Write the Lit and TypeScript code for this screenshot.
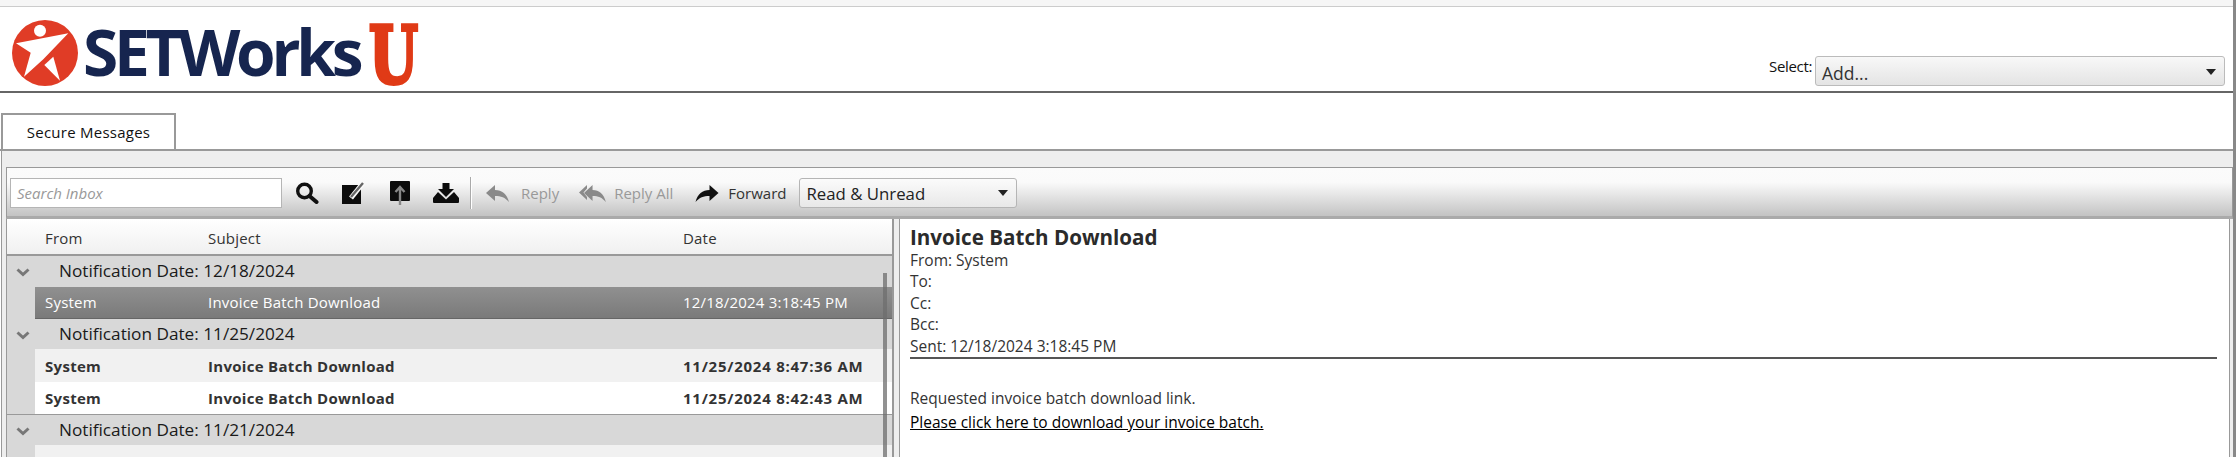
import { LitElement, html, css, svg } from "lit";
import { customElement } from "lit/decorators.js";

const chevron = html`<svg class="chev" width="14" height="9" viewBox="0 0 14 9"><path d="M1.5 1.5 L7 6.5 L12.5 1.5" fill="none" stroke="#777" stroke-width="3"/></svg>`;

const replyPath = svg`<path d="M0 8 L9 0 V5 C16 5 21 9 23 17 C19 12.5 15 11 9 11 V16 Z"/>`;

@customElement("app-root")
export class AppRoot extends LitElement {
  static styles = css`
    :host { display: block; width: 2237px; height: 457px; overflow: hidden; background: #fff; font-family: "Open Sans", "Noto Sans", sans-serif; color: #333; }
    .frame { width: 2233px; height: 457px; border-right: 3px solid #888; display: flex; flex-direction: column; overflow: hidden; }
    .top { height: 6px; flex: none; background: #f6f6f6; border-bottom: 1px solid #ccc; }
    .header { height: 84px; flex: none; border-bottom: 2px solid #666; display: flex; justify-content: space-between; position: relative; }
    .logo { display: flex; align-items: flex-start; padding: 13px 0 0 12px; }
    .wordmark { font-family: "Open Sans", sans-serif; font-weight: 700; font-size: 64px; line-height: 66px; color: #16254f; letter-spacing: -4.25px; margin-left: 5px; margin-top: -1px; }
    .u { font-family: "DejaVu Serif", serif; font-weight: 700; font-size: 78px; line-height: 66px; color: #e03a16; -webkit-text-stroke: 4px #e03a16; display: inline-block; transform: scaleX(.72); transform-origin: 0 0; margin-left: 10px; margin-top: 3px; }
    .add { display: flex; align-items: flex-start; padding: 49px 8px 0 0; gap: 3px; }
    .add label { font-size: 15px; color: #111; line-height: 20px; letter-spacing: -.35px; }
    .add .sel { width: 410px; height: 30px; box-sizing: border-box; border: 1px solid #bbb; border-radius: 3px; background: linear-gradient(#f8f8f8, #e4e4e4); display: flex; align-items: center; justify-content: space-between; padding: 3px 8px 0 6px; font-size: 17.5px; color: #333; }
    .caret { width: 0; height: 0; border-left: 5px solid transparent; border-right: 5px solid transparent; border-top: 6px solid #222; margin-top: -1px; }
    .tabs { height: 58px; flex: none; box-sizing: border-box; padding: 20px 0 0 1px; border-bottom: 2px solid #999; display: flex; }
    .tab { width: 175px; height: 36px; box-sizing: border-box; border: 2px solid #999; border-bottom: none; background: #fff; font-size: 15px; letter-spacing: .25px; color: #111; display: flex; align-items: center; justify-content: center; }
    .panel { flex: 1; min-height: 0; margin-left: 1px; border-left: 1px solid #999; background: #eee; padding: 16px 0 0 4px; display: flex; flex-direction: column; }
    .toolbar { height: 46px; padding-top: 2px; flex: none; border: 1px solid #999; border-bottom: 3px solid #aaa; display: flex; align-items: center; background: linear-gradient(#fbfbfb 0%, #fafafa 30%, #c3c3c3 100%); }
    .search { width: 272px; height: 30px; box-sizing: border-box; margin-left: 3px; border: 1px solid #b5b5b5; background: #fff; font-style: italic; font-size: 15px; color: #999; display: flex; align-items: center; padding-left: 6px; }
    .toolbar svg { flex: none; display: block; }
    .sep { width: 1px; height: 32px; background: #aaa; box-shadow: 1px 0 0 #fff; margin-left: 10px; }
    .btn { font-size: 15px; color: #999; }
    .btn.on { color: #333; }
    .rsel { width: 218px; height: 30px; box-sizing: border-box; margin-left: 13px; border: 1px solid #b5b5b5; border-radius: 3px; background: linear-gradient(#fbfbfb, #e8e8e8); display: flex; align-items: center; justify-content: space-between; padding: 0 8px 0 6px; font-size: 16.8px; color: #222; }
    .main { flex: 1; min-height: 0; display: flex; margin-right: 3px; border-left: 1px solid #999; background: #fff; }
    .list { width: 885px; flex: none; position: relative; overflow: hidden; background: #d8d8d8; }
    .grid { display: grid; grid-template-columns: 163px 475px 1fr; align-items: center; font-size: 15px; letter-spacing: .2px; }
    .head { height: 35px; box-sizing: content-box; padding-left: 38px; background: linear-gradient(#fff, #f0f0f0); border-bottom: 2px solid #999; color: #333; }
    .head > div { padding-top: 3px; }
    .ghead { height: 30.5px; box-sizing: border-box; padding-bottom: 1px; display: flex; align-items: center; font-size: 17.2px; color: #1a1a1a; }
    .chev { margin: 4px 0 0 9px; flex: none; }
    .ghead span { margin-left: 29px; }
    .group.rule { border-top: 1px solid #999; }
    .row { height: 32.3px; margin-left: 28px; padding-left: 10px; box-sizing: border-box; background: #f1f1f1; color: #333; }
    .row.alt { background: #fff; }
    .row.unread { font-weight: 700; letter-spacing: .3px; padding-top: 1px; }
    .row.unread > div:last-child { letter-spacing: .75px; }
    .row.sel { background: linear-gradient(#909090, #7a7a7a); color: #fff; border-bottom: 1px solid #666; }
    .scroll { position: absolute; right: 5px; top: 54px; bottom: 0; width: 4px; background: rgba(110, 110, 110, .75); }
    .split { flex: none; box-sizing: border-box; border-left: 2px solid #999; background: #eee; border-right: 1px solid #999; width: 8px; }
    .read { flex: 1; min-width: 0; box-sizing: border-box; border-right: 1px solid #999; padding: 6px 12px 0 10px; font-size: 15.5px; line-height: 21.4px; color: #333; }
    .read h1 { margin: 0; font-size: 20.6px; line-height: 25px; font-weight: 700; color: #2b2b2b; }
    .meta { border-bottom: 2px solid #555; }
    .body { margin-top: 27px; line-height: 24px; }
    .body a { color: #000; text-decoration: underline; display: block; }
  `;

  private icons = {
    search: html`<svg width="24" height="22" viewBox="0 0 24 22" style="margin-left:13px"><circle cx="9.5" cy="9" r="6.8" fill="none" stroke="#111" stroke-width="3.4"/><path d="M14.5 14 L21.5 20" stroke="#111" stroke-width="4" stroke-linecap="round"/></svg>`,
    compose: html`<svg width="24" height="24" viewBox="0 0 24 24" style="margin-left:23px"><rect x="0" y="4" width="19" height="19" fill="#0c0c0c"/><path d="M9 17 L21 2" stroke="#fbfbfb" stroke-width="5"/><path d="M9 16 L21 2" stroke="#666" stroke-width="2.4"/></svg>`,
    upload: html`<svg width="21" height="25" viewBox="0 0 21 25" style="margin-left:24px"><rect x="0" y="0" width="20" height="20" rx="1" fill="#0c0c0c"/><path d="M10 24 V7 M5.5 11 L10 6 L14.5 11" fill="none" stroke="#888" stroke-width="2.4"/></svg>`,
    download: html`<svg width="27" height="20" viewBox="0 0 27 20" style="margin-left:22px"><path d="M9.5 0 H16.5 V6 H21 L13 14 L5 6 H9.5 Z" fill="#0c0c0c"/><path d="M0 15 L5 9 L13 16.5 L21 9 L26 15 V19 Q26 20 25 20 H1 Q0 20 0 19 Z" fill="#0c0c0c"/></svg>`,
    reply: html`<svg width="23" height="17" viewBox="0 0 23 17" fill="#8a8a8a" style="margin-left:15px">${replyPath}</svg>`,
    replyAll: html`<svg width="27" height="17" viewBox="0 0 27 17" fill="#8a8a8a" style="margin-left:20px"><path d="M0 7.5 L8 0 V3.5 L4.5 7.5 L8 12 V15 Z"/><g transform="translate(5 0) scale(.95 1)">${replyPath}</g></svg>`,
    forward: html`<svg width="24" height="17" viewBox="0 0 23 17" fill="#111" style="margin-left:22px"><g transform="translate(23 0) scale(-1 1)">${replyPath}</g></svg>`,
  };

  private row(from: string, subject: string, date: string, cls = "") {
    return html`<div class="grid row ${cls}"><div>${from}</div><div>${subject}</div><div>${date}</div></div>`;
  }

  render() {
    const i = this.icons;
    return html`
      <div class="frame">
        <div class="top"></div>
        <div class="header">
          <div class="logo">
            <svg width="66" height="66" viewBox="12 20 66 66">
              <circle cx="45" cy="53" r="33" fill="#e03c26"/>
              <circle cx="40" cy="30.7" r="6" fill="#fff"/>
              <path d="M16 43.3 L68.3 33.3 L43.3 59.3 L24 76.7 L30.7 52.7 Z" fill="#fff"/>
              <path d="M44.3 65 L53.3 56.7 L60 80.7 Z" fill="#fff"/>
            </svg>
            <div class="wordmark">SETWorks</div>
            <div class="u">U</div>
          </div>
          <div class="add">
            <label>Select:</label>
            <div class="sel"><span>Add...</span><i class="caret"></i></div>
          </div>
        </div>
        <div class="tabs"><div class="tab">Secure Messages</div></div>
        <div class="panel">
          <div class="toolbar">
            <div class="search">Search Inbox</div>
            ${i.search}${i.compose}${i.upload}${i.download}
            <div class="sep"></div>
            ${i.reply}<span class="btn" style="margin-left:12px">Reply</span>
            ${i.replyAll}<span class="btn" style="margin-left:8px">Reply All</span>
            ${i.forward}<span class="btn on" style="margin-left:9px">Forward</span>
            <div class="rsel"><span>Read &amp; Unread</span><i class="caret"></i></div>
          </div>
          <div class="main">
            <div class="list">
              <div class="grid head"><div>From</div><div>Subject</div><div>Date</div></div>
              <div class="group">
                <div class="ghead">${chevron}<span>Notification Date: 12/18/2024</span></div>
                ${this.row("System", "Invoice Batch Download", "12/18/2024 3:18:45 PM", "sel")}
              </div>
              <div class="group">
                <div class="ghead">${chevron}<span>Notification Date: 11/25/2024</span></div>
                ${this.row("System", "Invoice Batch Download", "11/25/2024 8:47:36 AM", "unread")}
                ${this.row("System", "Invoice Batch Download", "11/25/2024 8:42:43 AM", "unread alt")}
              </div>
              <div class="group rule">
                <div class="ghead">${chevron}<span>Notification Date: 11/21/2024</span></div>
                ${this.row("", "Invoice batch download failed", "")}
              </div>
              <div class="scroll"></div>
            </div>
            <div class="split"></div>
            <div class="read">
              <div class="meta">
                <h1>Invoice Batch Download</h1>
                <div>From: System</div>
                <div>To:</div>
                <div>Cc:</div>
                <div>Bcc:</div>
                <div>Sent: 12/18/2024 3:18:45 PM</div>
              </div>
              <div class="body">
                <div>Requested invoice batch download link.</div>
                <a>Please click here to download your invoice batch.</a>
              </div>
            </div>
          </div>
        </div>
      </div>
    `;
  }
}
